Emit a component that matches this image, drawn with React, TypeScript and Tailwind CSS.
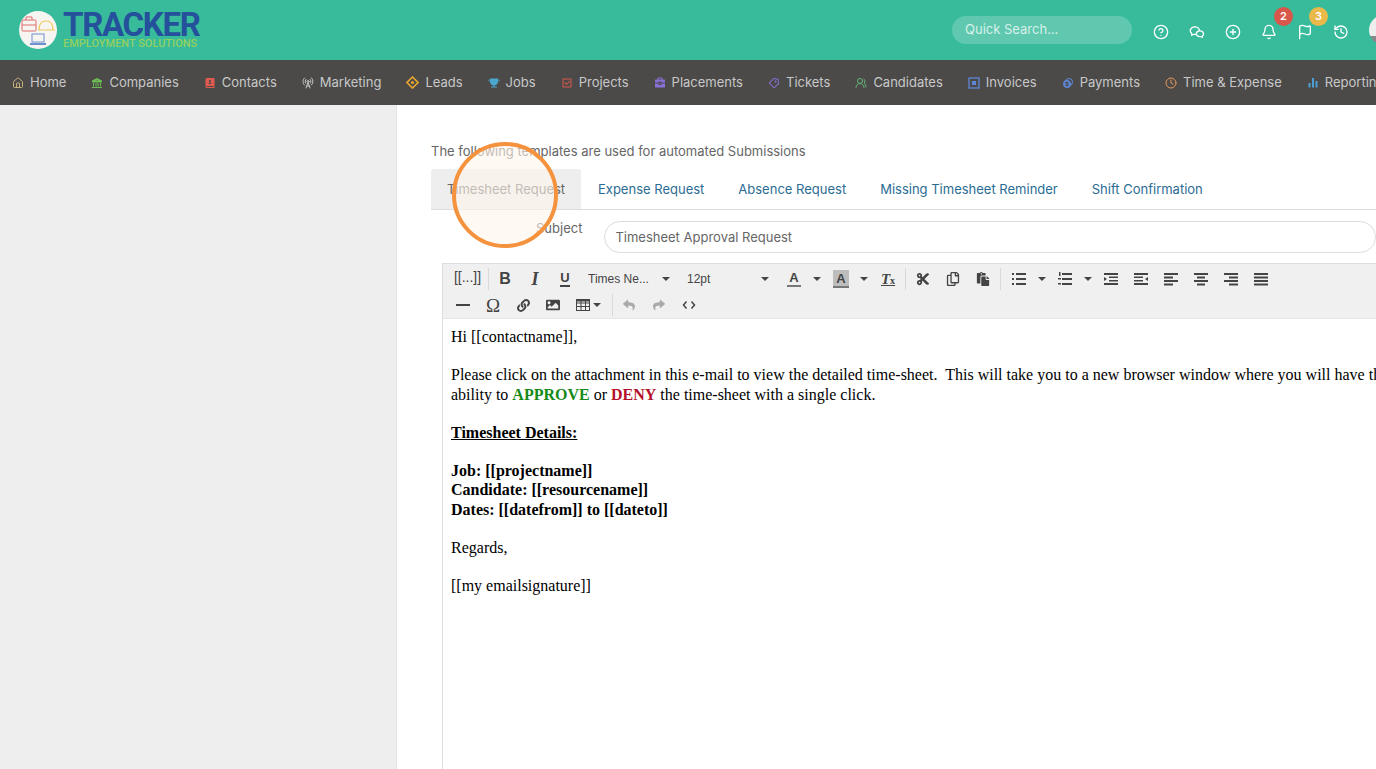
import React from 'react';
import { Bell, CircleHelp, CirclePlus, Flag, History, House, RadioTower, Clock, UsersRound } from 'lucide-react';
import { RiWechatLine, RiBankFill, RiContactsBook2Fill, RiTrophyFill, RiCheckboxLine, RiPriceTag3Line, RiBriefcase4Fill, RiBarChartFill, RiCoinsFill } from 'react-icons/ri';
import { FaCut, FaLink, FaImage, FaReply, FaShare, FaPaste, FaRegCopy } from 'react-icons/fa';

const LeadIcon = () => (
  <svg width="13" height="13" viewBox="0 0 13 13" className="text-[#e8a530]">
    <path d="M6.500 1 12 6.500 6.500 12 1 6.500Z" fill="none" stroke="currentColor" strokeWidth="1.6" />
    <circle cx="6.500" cy="6.500" r="1.6" fill="currentColor" />
  </svg>
);

const InvoiceIcon = () => (
  <svg width="12" height="12" viewBox="0 0 12 12" className="text-[#5f86d6]">
    <rect x="1" y="1" width="10" height="10" fill="none" stroke="currentColor" strokeWidth="1.3" />
    <rect x="4" y="4" width="4" height="4" fill="currentColor" />
  </svg>
);

const navItems = [
  { label: 'Home', icon: <House size={12} className="text-[#c9b37c]" /> },
  { label: 'Companies', icon: <RiBankFill size={12} className="text-[#6dbb55]" /> },
  { label: 'Contacts', icon: <RiContactsBook2Fill size={12} className="text-[#e05a4e]" /> },
  { label: 'Marketing', icon: <RadioTower size={12} className="text-[#c9c9c9]" /> },
  { label: 'Leads', icon: <LeadIcon /> },
  { label: 'Jobs', icon: <RiTrophyFill size={12} className="text-[#4aa7cf]" /> },
  { label: 'Projects', icon: <RiCheckboxLine size={12} className="text-[#d9584c]" /> },
  { label: 'Placements', icon: <RiBriefcase4Fill size={12} className="text-[#8a6fd6]" /> },
  { label: 'Tickets', icon: <RiPriceTag3Line size={12} className="text-[#8a6fd6]" /> },
  { label: 'Candidates', icon: <UsersRound size={12} className="text-[#65b57a]" /> },
  { label: 'Invoices', icon: <InvoiceIcon /> },
  { label: 'Payments', icon: <RiCoinsFill size={12} className="text-[#5f86d6]" /> },
  { label: 'Time & Expense', icon: <Clock size={12} className="text-[#e8975a]" /> },
  { label: 'Reporting', icon: <RiBarChartFill size={12} className="text-[#4aa0d6]" /> },
];

const tabs = ['Expense Request', 'Absence Request', 'Missing Timesheet Reminder', 'Shift Confirmation'];

const Caret = () => (
  <span className="flex w-[16px] justify-center">
    <span className="h-0 w-0 border-x-[4px] border-t-[4px] border-x-transparent border-t-[#444]" />
  </span>
);

const Btn = ({ children }: { children: React.ReactNode }) => (
  <span className="flex h-[24px] w-[30px] items-center justify-center text-[#444]">{children}</span>
);

const Sep = () => <span className="mx-[1px] h-[22px] w-px bg-[#d9d9d9]" />;

// y positions of the bars, x start and x end
const Lines = ({ bars }: { bars: [number, number, number][] }) => (
  <svg width="14" height="14" viewBox="0 0 14 14">
    {bars.map(([y, a, b]) => (
      <rect key={y} x={a} y={y} width={b - a} height="2" fill="#444" />
    ))}
  </svg>
);

const BulletIcon = () => (
  <svg width="14" height="14" viewBox="0 0 14 14" fill="#444">
    <rect x="0" y="1" width="2" height="2" />
    <rect x="0" y="6" width="2" height="2" />
    <rect x="0" y="11" width="2" height="2" />
    <rect x="4" y="1" width="10" height="2" />
    <rect x="4" y="6" width="10" height="2" />
    <rect x="4" y="11" width="10" height="2" />
  </svg>
);

const NumberIcon = () => (
  <svg width="14" height="14" viewBox="0 0 14 14" fill="#444">
    <rect x="1" y="0" width="1.500" height="4" />
    <rect x="0" y="6" width="3" height="1.500" />
    <rect x="0" y="11" width="3" height="1.500" />
    <rect x="4" y="1" width="10" height="2" />
    <rect x="4" y="6" width="10" height="2" />
    <rect x="4" y="11" width="10" height="2" />
  </svg>
);

const IndentIcon = ({ out }: { out?: boolean }) => (
  <svg width="14" height="14" viewBox="0 0 14 14" fill="#444">
    <rect x="0" y="1" width="14" height="2" />
    <rect x={out ? 0 : 5} y="4.500" width="9" height="1.500" />
    <rect x={out ? 0 : 5} y="8" width="9" height="1.500" />
    <rect x="0" y="11" width="14" height="2" />
    {out ? <path d="M14 5 11 7 14 9Z" /> : <path d="M0 5 3 7 0 9Z" />}
  </svg>
);

const TableIcon = () => (
  <svg width="14" height="12" viewBox="0 0 14 12" fill="none" stroke="#444">
    <rect x="0.500" y="0.500" width="13" height="11" />
    <path d="M0 4h14M0 7.500h14M5 1v11M9.500 1v11" />
    <rect x="0" y="0" width="14" height="2.500" fill="#444" stroke="none" />
  </svg>
);

const CodeIcon = () => (
  <svg width="14" height="10" viewBox="0 0 14 10" fill="none" stroke="#444" strokeWidth="1.500">
    <path d="M4.500 1.500 1.500 5l3 3.500M9.500 1.500l3 3.500-3 3.500" />
  </svg>
);

const Toolbar = () => (
  <div className="flex h-[54px] flex-col bg-[#f0f0f0] pl-[5px] pt-[2px] text-[12px] text-[#444]">
    <div className="flex h-[26px] items-center">
      <span className="flex w-[39px] justify-center pb-[3px] font-['Liberation_Sans',sans-serif] text-[14px]">[[...]]</span>
      <Sep />
      <Btn><span className="font-['Liberation_Sans',sans-serif] text-[16px] font-bold">B</span></Btn>
      <Btn><span className="font-['Liberation_Serif',serif] text-[18px] font-bold italic">I</span></Btn>
      <Btn><span className="border-b-[2px] border-[#444] font-['Liberation_Sans',sans-serif] text-[13px] font-bold leading-[14px]">U</span></Btn>
      <span className="flex w-[100px] items-center font-['Liberation_Sans',sans-serif] pl-[8px]">
        <span className="w-[70px]">Times Ne...</span>
        <Caret />
      </span>
      <span className="flex w-[99px] items-center font-['Liberation_Sans',sans-serif] pl-[7px]">
        <span className="w-[70px]">12pt</span>
        <Caret />
      </span>
      <Btn><span className="border-b-[2px] border-[#777] px-[2px] font-['Liberation_Sans',sans-serif] text-[13px] font-bold leading-[14px]">A</span></Btn>
      <Caret />
      <span className="w-[1px]" />
      <Btn><span className="flex h-[18px] w-[16px] items-end justify-center border-b-[2px] border-[#777] bg-[#bdbdbd] font-['Liberation_Sans',sans-serif] text-[13px] font-bold leading-[14px]">A</span></Btn>
      <Caret />
      <span className="w-[1px]" />
      <Btn><span className="font-['Liberation_Serif',serif] text-[15px] font-bold italic underline">T<span className="text-[10px] not-italic">x</span></span></Btn>
      <span className="w-[1px]" />
      <Sep />
      <span className="w-[1px]" />
      <Btn><FaCut size={14} /></Btn>
      <Btn><FaRegCopy size={14} /></Btn>
      <Btn><FaPaste size={14} /></Btn>
      <span className="w-[1px]" />
      <Sep />
      <span className="w-[2px]" />
      <Btn><BulletIcon /></Btn>
      <Caret />
      <Btn><NumberIcon /></Btn>
      <Caret />
      <Btn><IndentIcon /></Btn>
      <Btn><IndentIcon out /></Btn>
      <Btn><Lines bars={[[1, 0, 14], [4.5, 0, 9], [8, 0, 14], [11.5, 0, 9]]} /></Btn>
      <Btn><Lines bars={[[1, 0, 14], [4.5, 3, 11], [8, 0, 14], [11.5, 3, 11]]} /></Btn>
      <Btn><Lines bars={[[1, 0, 14], [4.5, 5, 14], [8, 0, 14], [11.5, 5, 14]]} /></Btn>
      <Btn><Lines bars={[[1, 0, 14], [4.5, 0, 14], [8, 0, 14], [11.5, 0, 14]]} /></Btn>
    </div>
    <div className="flex h-[26px] items-center">
      <Btn><span className="h-[2px] w-[14px] bg-[#444]" /></Btn>
      <Btn><span className="font-['Liberation_Serif',serif] text-[19px] leading-none">Ω</span></Btn>
      <Btn><FaLink size={13} /></Btn>
      <Btn><FaImage size={14} /></Btn>
      <span className="flex w-[38px] items-center pl-[8px]">
        <TableIcon />
        <span className="-ml-px"><Caret /></span>
      </span>
      <span className="w-[5px]" />
      <Sep />
      <Btn><FaReply size={12} className="text-[#aaa]" /></Btn>
      <Btn><FaShare size={12} className="text-[#aaa]" /></Btn>
      <Btn><CodeIcon /></Btn>
    </div>
  </div>
);

export default function App() {
  return (
    <div className="relative flex h-[769px] w-[1376px] flex-col overflow-hidden bg-white font-['Inter',sans-serif]">
      <header className="flex h-[60px] shrink-0 items-center justify-between bg-[#37bb9b] pl-[19px]">
        <div className="flex items-center gap-[6px]">
          <svg width="38" height="38" viewBox="0 0 38 38">
            <circle cx="19" cy="19" r="19" fill="#f7f5f2" />
            <rect x="3" y="9" width="14" height="11" rx="1" fill="none" stroke="#e36a6a" strokeWidth="1" />
            <path d="M3 14h14M7 9V6h6v3" fill="none" stroke="#e36a6a" strokeWidth="1" />
            <path d="M20 19c0-6 3-9 7-9s7 3 7 9M19 19h17" fill="none" stroke="#eec95c" strokeWidth="1.2" />
            <rect x="13" y="23" width="12" height="8" fill="none" stroke="#6d90cf" strokeWidth="1" />
            <path d="M11 33h16" stroke="#6d90cf" strokeWidth="2" />
          </svg>
          <div className="flex w-[137px] flex-col font-['Roboto',sans-serif]">
            <span className="text-[33px] font-bold leading-[27px] tracking-[-1.3px] text-[#25509b]">TRACKER</span>
            <span className="whitespace-nowrap text-[11px] font-medium leading-[11px] text-[#93d05f]">EMPLOYMENT SOLUTIONS</span>
          </div>
        </div>
        <div className="flex items-center">
          <div className="mr-[21px] flex h-[28px] w-[180px] items-center rounded-full bg-white/20 pl-[13px] text-[13px] text-white/75">Quick Search...</div>
          <div className="relative mt-[4px] flex items-center gap-[20px] text-white">
            <CircleHelp size={16} strokeWidth={2} />
            <RiWechatLine size={16} />
            <CirclePlus size={16} strokeWidth={2} />
            <span className="relative">
              <Bell size={16} strokeWidth={2} />
              <span className="absolute -right-[16px] -top-[17px] flex h-[19px] w-[19px] items-center justify-center rounded-full bg-[#d9574a] text-[11px] font-semibold">2</span>
            </span>
            <span className="relative">
              <Flag size={16} strokeWidth={2} />
              <span className="absolute -right-[15px] -top-[17px] flex h-[19px] w-[19px] items-center justify-center rounded-full bg-[#e9b949] text-[11px] font-semibold">3</span>
            </span>
            <History size={16} strokeWidth={2} />
            <span className="-mr-[23px] -mt-[4px] block h-[30px] w-[30px] rounded-full bg-[linear-gradient(#eee_70%,#888_70%)]" />
          </div>
        </div>
      </header>

      <nav className="flex h-[45px] shrink-0 items-center gap-[25px] whitespace-nowrap bg-[#4b4a48] pl-[12px] text-[13px] text-[#c8c8c8]">
        {navItems.map(item => (
          <span key={item.label} className="flex items-center gap-[6px]">
            {item.icon}
            {item.label}
          </span>
        ))}
      </nav>

      <div className="flex min-h-0 flex-1">
        <aside className="w-[397px] shrink-0 border-r border-[#e3e3e3] bg-[#eeeeee]" />
        <main className="min-w-0 flex-1 pl-[34px] pt-[38px] text-[13px]">
          <p className="h-[26px] leading-[16px] text-[#666]">The following templates are used for automated Submissions</p>
          <div className="flex h-[41px] border-b border-[#dddddd]">
            <span className="flex h-[40px] w-[150px] items-center justify-center rounded-t-[3px] bg-[#eeeeee] pt-[2px] text-[#666]">Timesheet Request</span>
            {tabs.map(tab => (
              <span key={tab} className="flex h-[40px] items-center whitespace-nowrap px-[17px] pt-[2px] text-[#2b6c93] first:pl-[18px]">{tab}</span>
            ))}
          </div>
          <div className="mt-[11px] flex">
            <span className="w-[177px] text-right leading-[14px] text-[#666]">Subject</span>
            <div className="ml-[22px] flex h-[32px] w-[900px] items-center rounded-full border border-[#dddddd] pl-[10px] pt-[2px] text-[#666]">Timesheet Approval Request</div>
          </div>
          <div className="ml-[11px] mt-[10px] h-[600px] w-[1000px] border-l border-t border-[#dddddd]">
            <Toolbar />
            <div className="whitespace-nowrap border-t border-[#e5e5e5] pl-[8px] pt-[8px] font-['Liberation_Serif',serif] text-[16px] leading-[19.6px] text-black">
              <p>Hi [[contactname]],</p>
              <p className="mt-[18.5px]">
                Please click on the attachment in this e-mail to view the detailed time-sheet.&nbsp; This will take you to a new browser window where you will have the
                <br />
                ability to <b className="text-[#178a17]">APPROVE</b> or <b className="text-[#b5112b]">DENY</b> the time-sheet with a single click.
              </p>
              <p className="mt-[18.5px] font-bold underline">Timesheet Details:</p>
              <p className="mt-[18.5px] font-bold">
                Job: [[projectname]]
                <br />
                Candidate: [[resourcename]]
                <br />
                Dates: [[datefrom]] to [[dateto]]
              </p>
              <p className="mt-[18.5px]">Regards,</p>
              <p className="mt-[18.5px]">[[my emailsignature]]</p>
            </div>
          </div>
        </main>
      </div>

      <div className="absolute left-[452px] top-[142px] h-[106px] w-[106px] rounded-full border-[4px] border-[#f5923e] bg-[#fff5eb]/60" />
    </div>
  );
}
